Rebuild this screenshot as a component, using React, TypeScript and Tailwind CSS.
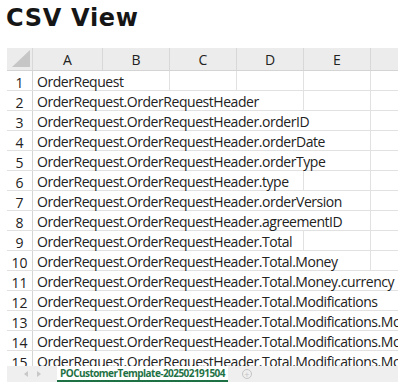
import React from "react";

const rows = [
  "OrderRequest",
  "OrderRequest.OrderRequestHeader",
  "OrderRequest.OrderRequestHeader.orderID",
  "OrderRequest.OrderRequestHeader.orderDate",
  "OrderRequest.OrderRequestHeader.orderType",
  "OrderRequest.OrderRequestHeader.type",
  "OrderRequest.OrderRequestHeader.orderVersion",
  "OrderRequest.OrderRequestHeader.agreementID",
  "OrderRequest.OrderRequestHeader.Total",
  "OrderRequest.OrderRequestHeader.Total.Money",
  "OrderRequest.OrderRequestHeader.Total.Money.currency",
  "OrderRequest.OrderRequestHeader.Total.Modifications",
  "OrderRequest.OrderRequestHeader.Total.Modifications.Modification",
  "OrderRequest.OrderRequestHeader.Total.Modifications.Modification",
  "OrderRequest.OrderRequestHeader.Total.Modifications.Modification",
];

const cols = ["A", "B", "C", "D", "E", ""];
const widths = ["w-[70px]", "w-[67px]", "w-[67px]", "w-[67px]", "w-[67px]", "w-[67px]"];

export default function App() {
  return (
    <div className="w-[398px] h-[382px] bg-white overflow-hidden flex flex-col" style={{ fontFamily: "'Open Sans', sans-serif" }}>
      <div className="h-[48px] pl-[6px] pt-[1px] text-[24px] font-bold text-[#161616] leading-[34px] tracking-[0.7px]" style={{ fontFamily: "'DejaVu Sans', sans-serif" }}>
        CSV View
      </div>
      <div className="ml-[7px] h-[318px] overflow-hidden flex flex-col text-[#222]">
        <div className="flex h-[23px] bg-[#ececec] border-b border-[#d4d4d4] shrink-0">
          <div className="w-[26px] shrink-0 border-r border-[#d8d8d8] relative">
            <svg className="absolute right-[2px] bottom-[3px]" width="18" height="17" viewBox="0 0 18 17">
              <polygon points="0,17 18,17 18,0" fill="#c6c6c6" />
            </svg>
          </div>
          {cols.map((c, i) => (
            <div key={i} className={`${widths[i]} shrink-0 border-r border-[#d8d8d8] flex items-center justify-center text-[14px] pt-[1px]`}>
              {c}
            </div>
          ))}
        </div>
        {rows.map((t, r) => (
          <div key={r} className="flex h-[20px] shrink-0 border-b border-[#e1e1e1]">
            <div className="w-[26px] shrink-0 border-r border-[#d4d4d4] flex items-center justify-center text-[14px] pt-[3px]">
              {r + 1}
            </div>
            <div className="relative flex">
              {cols.map((_, i) => (
                <div key={i} className={`${widths[i]} shrink-0 border-r border-[#e1e1e1]`} />
              ))}
              <span className="absolute left-0 top-0 h-[19px] bg-white pl-[4px] pr-[1px] whitespace-nowrap text-[14px] leading-[19px] pt-[1px] tracking-[-0.45px]">
                {t}
              </span>
            </div>
          </div>
        ))}
      </div>
      <div className="ml-[7px] h-[16px] bg-[#efefef] flex items-stretch shrink-0">
        <div className="w-[50px] flex items-center justify-center gap-[9px]">
          <svg width="4" height="6" viewBox="0 0 4 6"><polygon points="4,0 4,6 0,3" fill="#c8c8c8" /></svg>
          <svg width="4" height="6" viewBox="0 0 4 6"><polygon points="0,0 0,6 4,3" fill="#c8c8c8" /></svg>
        </div>
        <div className="bg-white border-b-2 border-[#1e7145] px-[3px] flex items-center text-[10px] font-bold text-[#1e7145] leading-none tracking-[-0.55px]">
          POCustomerTemplate-202502191504
        </div>
        <div className="ml-[14px] flex items-center">
          <div className="w-[10px] h-[10px] rounded-full border border-[#c4c4c4] flex items-center justify-center text-[9px] text-[#c4c4c4] leading-none">+</div>
        </div>
      </div>
    </div>
  );
}
